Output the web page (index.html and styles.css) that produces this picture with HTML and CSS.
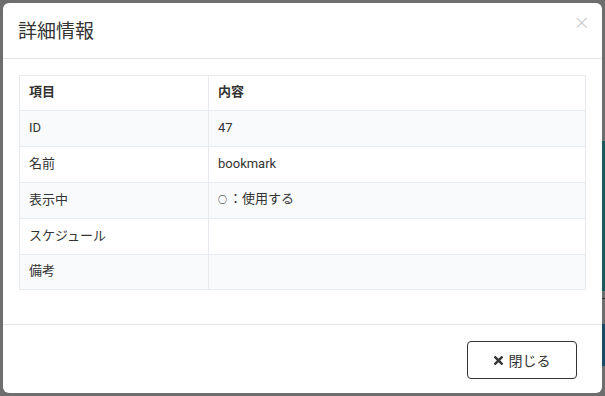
FILE: index.html
```html
<!DOCTYPE html>
<html>
<head>
    <title>詳細情報</title>
    <link rel="stylesheet" href="styles.css">
</head>
<body>
    <div class="page-edge">
        <span class="edge-teal"></span>
        <span class="edge-line"></span>
        <span class="edge-blue"></span>
    </div>
    <div class="modal">
        <div class="modal-header">
            <h4 class="modal-title">詳細情報</h4>
            <span class="close">&times;</span>
        </div>
        <div class="modal-body">
            <table class="detail-table">
                <thead>
                    <tr><th class="col-key">項目</th><th>内容</th></tr>
                </thead>
                <tbody>
                    <tr><td>ID</td><td>47</td></tr>
                    <tr><td>名前</td><td>bookmark</td></tr>
                    <tr><td>表示中</td><td><span class="mark">○</span>：使用する</td></tr>
                    <tr><td>スケジュール</td><td></td></tr>
                    <tr><td>備考</td><td></td></tr>
                </tbody>
            </table>
        </div>
        <div class="modal-footer">
            <button class="btn-close">
                <svg class="icon-x" viewBox="0 0 10 10" width="9" height="9">
                    <path d="M1.5 1.5 L8.5 8.5 M8.5 1.5 L1.5 8.5" stroke="#333" stroke-width="2.6" stroke-linecap="square"/>
                </svg>
                閉じる
            </button>
        </div>
    </div>
</body>
</html>
```

FILE: styles.css
```css
body {
    margin: 0;
    height: 396px;
    overflow: hidden;
    background-color: #6e6e6e;
    font-family: Roboto, "Noto Sans CJK JP", sans-serif;
    color: #333;
    position: relative;
}

/* bits of the page under the overlay, visible at the right edge */
.page-edge {
    position: absolute;
    right: 0;
    top: 0;
    width: 3px;
    height: 396px;
}

.edge-teal {
    position: absolute;
    top: 141px;
    left: 0;
    width: 3px;
    height: 150px;
    background-color: #1d5a5c;
}

.edge-line {
    position: absolute;
    top: 298px;
    left: 0;
    width: 3px;
    height: 1px;
    background-color: #333;
}

.edge-blue {
    position: absolute;
    top: 324px;
    left: 0;
    width: 3px;
    height: 42px;
    background-color: #1c4b66;
}

.modal {
    position: relative;
    margin: 3px 0 0 3px;
    width: 599px;
    height: 390px;
    background-color: #fff;
    border-radius: 6px;
    display: flex;
    flex-direction: column;
}

.modal-header {
    height: 55px;
    border-bottom: 1px solid #e5e5e5;
    display: flex;
    align-items: center;
    justify-content: space-between;
    padding: 0 12px 0 15px;
}

.modal-title {
    margin: 0 0 3px;
    font-size: 19px;
    font-weight: normal;
    color: #333;
}

.close {
    font-size: 20px;
    color: #c8c8c8;
    align-self: flex-start;
    margin-top: 7px;
    font-family: "DejaVu Sans", sans-serif;
    font-weight: 300;
}

.modal-body {
    padding: 16px 16px 34px;
}

.detail-table {
    width: 100%;
    border-collapse: collapse;
    font-size: 13px;
    line-height: 16px;
}

.detail-table th,
.detail-table td {
    border: 1px solid #e7eaef;
    text-align: left;
    padding: 0 9px 2px;
    height: 33px;
}

.detail-table th {
    font-weight: bold;
    height: 32px;
}

.detail-table tbody tr:last-child td {
    height: 32px;
}

.col-key {
    width: 170px;
}

.detail-table tbody tr:nth-child(odd) {
    background-color: #f9fafc;
}

.mark {
    font-size: 9px;
    font-weight: bold;
    color: #222;
    margin-right: 2px;
}

.modal-footer {
    flex: 1;
    border-top: 1px solid #e5e5e5;
    display: flex;
    justify-content: flex-end;
    align-items: flex-start;
    padding: 16px 25px 0 0;
}

.btn-close {
    width: 110px;
    height: 38px;
    background-color: #fff;
    border: 1px solid #333;
    border-radius: 4px;
    font-family: Roboto, "Noto Sans CJK JP", sans-serif;
    font-size: 14px;
    color: #333;
    display: flex;
    align-items: center;
    justify-content: center;
    gap: 6px;
    cursor: pointer;
}

.icon-x {
    display: block;
}
```
